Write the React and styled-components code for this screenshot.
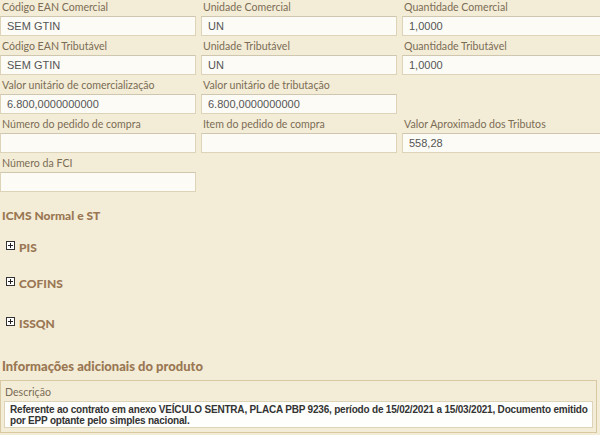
import React from "react";
import styled, { createGlobalStyle } from "styled-components";

const Global = createGlobalStyle`
  html, body { margin: 0; padding: 0; background: #f3ecd7; }
  body { font-family: Lato, "DejaVu Sans", sans-serif; }
`;

const Page = styled.div`
  width: 600px;
  height: 435px;
  overflow: hidden;
  background: #f3ecd7;
`;

const Grid = styled.div`
  display: grid;
  grid-template-columns: 196px 196px 200px;
  column-gap: 5px;
  row-gap: 4px;
  padding-top: 1px;
`;

const Field = styled.div`
  display: flex;
  flex-direction: column;
  grid-column: ${(p) => p.$col || "auto"};
`;

const Label = styled.label`
  font-family: Lato, "DejaVu Sans", sans-serif;
  font-size: 10.6px;
  color: #7b6c55;
  height: 13px;
  line-height: 13px;
  padding-left: 2px;
  margin-bottom: 2px;
  white-space: nowrap;
`;

const Input = styled.div`
  box-sizing: border-box;
  height: 20px;
  background: #fcfbf6;
  border: 1px solid #ddd3b9;
  border-top-color: #cfc6b0;
  font-family: "Liberation Sans", Arial, sans-serif;
  font-size: 11px;
  color: #555;
  line-height: 18px;
  padding-left: 6px;
`;

const Section = styled.h3`
  margin: 0;
  margin-top: ${(p) => p.$top}px;
  font-family: Lato, "DejaVu Sans", sans-serif;
  font-weight: 900;
  font-size: ${(p) => p.$size || 12}px;
  color: #9a7753;
  padding-left: 2px;
`;

const Toggle = styled.div`
  display: flex;
  align-items: center;
  gap: 4px;
  padding-left: 6px;
  margin-top: ${(p) => p.$top}px;
  font-family: Lato, "DejaVu Sans", sans-serif;
  font-weight: 900;
  font-size: 12px;
  color: #9a7753;
  height: 14px;
`;

const PlusBox = styled.span`
  box-sizing: border-box;
  width: 9px;
  height: 9px;
  border: 1px solid #333;
  background: #fff;
  position: relative;
  display: inline-block;
  margin-top: -3px;
  &::before, &::after {
    content: "";
    position: absolute;
    background: #222;
  }
  &::before { left: 1px; right: 1px; top: 3px; height: 1px; }
  &::after { top: 1px; bottom: 1px; left: 3px; width: 1px; }
`;

const Sections = styled.div`
  display: flex;
  flex-direction: column;
`;

const Box = styled.div`
  box-sizing: border-box;
  width: 597px;
  border: 1px solid #d8c9a3;
  padding: 5px 3px 4px 3px;
  margin-top: 6px;
`;

const BoxLabel = styled.div`
  font-family: Lato, "DejaVu Sans", sans-serif;
  font-size: 10.6px;
  color: #7b6c55;
  margin-bottom: 3px;
  padding-left: 1px;
`;

const TextArea = styled.div`
  box-sizing: border-box;
  background: #fefefc;
  border: 1px solid #ddd3b9;
  padding: 2px 0 1px 5px;
  font-family: "Liberation Sans", Arial, sans-serif;
  font-weight: bold;
  font-size: 10px;
  letter-spacing: -0.2px;
  line-height: 11px;
  color: #333;
`;

const fields = [
  ["Código EAN Comercial", "SEM GTIN"],
  ["Unidade Comercial", "UN"],
  ["Quantidade Comercial", "1,0000"],
  ["Código EAN Tributável", "SEM GTIN"],
  ["Unidade Tributável", "UN"],
  ["Quantidade Tributável", "1,0000"],
  ["Valor unitário de comercialização", "6.800,0000000000"],
  ["Valor unitário de tributação", "6.800,0000000000", "2 / span 1"],
  ["Número do pedido de compra", "", "1"],
  ["Item do pedido de compra", ""],
  ["Valor Aproximado dos Tributos", "558,28"],
  ["Número da FCI", "", "1"],
];

export default function App() {
  return (
    <Page>
      <Global />
      <Grid>
        {fields.map(([l, v, c]) => (
          <Field key={l} $col={c}>
            <Label>{l}</Label>
            <Input>{v}</Input>
          </Field>
        ))}
      </Grid>
      <Sections>
        <Section $top={16}>ICMS Normal e ST</Section>
        <Toggle $top={17}><PlusBox />PIS</Toggle>
        <Toggle $top={22}><PlusBox />COFINS</Toggle>
        <Toggle $top={26}><PlusBox />ISSQN</Toggle>
        <Section $top={28} $size={13}>Informações adicionais do produto</Section>
      </Sections>
      <Box>
        <BoxLabel>Descrição</BoxLabel>
        <TextArea>
          Referente ao contrato em anexo VEÍCULO SENTRA, PLACA PBP 9236, período de 15/02/2021 a 15/03/2021, Documento emitido por EPP optante pelo simples nacional.
        </TextArea>
      </Box>
    </Page>
  );
}
